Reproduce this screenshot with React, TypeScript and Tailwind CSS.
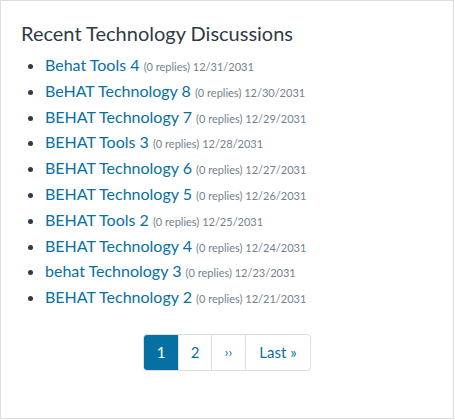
import React from "react";

const items = [
  ["Behat Tools 4", "12/31/2031"],
  ["BeHAT Technology 8", "12/30/2031"],
  ["BEHAT Technology 7", "12/29/2031"],
  ["BEHAT Tools 3", "12/28/2031"],
  ["BEHAT Technology 6", "12/27/2031"],
  ["BEHAT Technology 5", "12/26/2031"],
  ["BEHAT Tools 2", "12/25/2031"],
  ["BEHAT Technology 4", "12/24/2031"],
  ["behat Technology 3", "12/23/2031"],
  ["BEHAT Technology 2", "12/21/2031"],
];

export default function App() {
  return (
    <div className="w-[454px] h-[419px] bg-white border border-[#dddddd] px-[20px] pt-[19px]" style={{ fontFamily: "Lato, 'Open Sans', sans-serif" }}>
      <h2 className="text-[20px] leading-[26px] text-[#2d3b45] font-normal">Recent Technology Discussions</h2>
      <ul className="list-disc pl-[24px] mt-[6px] text-[#2d3b45] text-[16px]">
        {items.map(([t, d]) => (
          <li key={t} className="leading-[25.8px] marker:text-[#2d3b45]">
            <a className="text-[#0770a3] leading-none">{t}</a>{" "}
            <span className="text-[11px] leading-none text-[#73818c]">(0 replies) {d}</span>
          </li>
        ))}
      </ul>
      <div className="flex justify-center mt-[24px]">
        <div className="flex h-[37px] border border-[#dddddd] rounded-[4px] text-[15px] text-[#0770a3]">
          <span className="w-[34px] flex items-center justify-center bg-[#0770a3] text-white rounded-l-[3px]">1</span>
          <span className="w-[33px] flex items-center justify-center border-l border-[#dddddd]">2</span>
          <span className="w-[34px] flex items-center justify-center border-l border-[#dddddd] text-[13px]">››</span>
          <span className="w-[65px] flex items-center justify-center border-l border-[#dddddd]">Last »</span>
        </div>
      </div>
    </div>
  );
}
